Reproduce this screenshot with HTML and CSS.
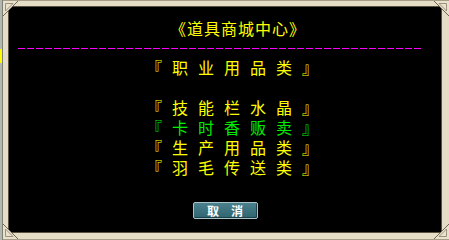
FILE: index.html
```html
<!DOCTYPE html>
<html lang="zh-CN">
  <head>
    <meta charset="UTF-8" />
    <title>道具商城中心</title>
    <link rel="stylesheet" href="styles.css">
  </head>
  <body>
    <div class="page">
      <!-- bord de la fenêtre voisine -->
      <div class="side">
        <div class="side-mark"></div>
      </div>

      <div class="frame">
        <svg class="corner tl" width="15" height="15" viewBox="0 0 15 15">
          <path d="M0 0H15L0 15Z" fill="#e9e1cb" />
          <path d="M15 0L0 15" stroke="#6e6552" stroke-width="1" />
          <path d="M2.5 2.5H10L2.5 10Z" fill="none" stroke="#9a927e" stroke-width="1" />
        </svg>
        <svg class="corner tr" width="15" height="15" viewBox="0 0 15 15">
          <path d="M0 0H15V15Z" fill="#e9e1cb" />
          <path d="M0 0L15 15" stroke="#6e6552" stroke-width="1" />
          <path d="M5 2.5H12.5V10Z" fill="none" stroke="#9a927e" stroke-width="1" />
        </svg>
        <svg class="corner bl" width="15" height="15" viewBox="0 0 15 15">
          <path d="M0 0V15H15Z" fill="#e9e1cb" />
          <path d="M0 0L15 15" stroke="#6e6552" stroke-width="1" />
          <path d="M2.5 5V12.5H10Z" fill="none" stroke="#9a927e" stroke-width="1" />
        </svg>
        <svg class="corner br" width="15" height="15" viewBox="0 0 15 15">
          <path d="M15 0V15H0Z" fill="#e9e1cb" />
          <path d="M15 0L0 15" stroke="#6e6552" stroke-width="1" />
          <path d="M12.5 5V12.5H5Z" fill="none" stroke="#9a927e" stroke-width="1" />
        </svg>

        <div class="screen">
          <h1 class="title">《道具商城中心》</h1>
          <div class="dashes"></div>

          <ul class="menu">
            <li>『职业用品类』</li>
            <li class="spacer"></li>
            <li>『技能栏水晶』</li>
            <li class="active">『卡时香贩卖』</li>
            <li>『生产用品类』</li>
            <li>『羽毛传送类』</li>
          </ul>

          <div class="actions">
            <button class="cancel-btn">取消</button>
          </div>
        </div>
      </div>
    </div>
  </body>
</html>
```

FILE: styles.css
```css
/* Base */
body {
  margin: 0;
  padding: 0;
  background: #a8ada6;
  font-family: "Noto Sans CJK SC", "Noto Sans", sans-serif;
  overflow: hidden;
}

.page {
  display: flex;
  width: 449px;
  height: 240px;
}

/* Fenêtre voisine à gauche */
.side {
  width: 3px;
  background: #b3b7ae;
  border-right: 1px solid #7c7f78;
  box-sizing: border-box;
}

.side-mark {
  margin-top: 49px;
  height: 14px;
  background: #ffff00;
}

/* Cadre beige */
.frame {
  position: relative;
  flex: 1;
  display: flex;
  padding: 5px 7px 6px 5px;
  background: #e6ddc6;
  border-top: 1px solid #a59d88;
  border-bottom: 1px solid #a59d88;
}

.corner {
  position: absolute;
}

.corner.tl { top: 0; left: 0; }
.corner.tr { top: 0; right: 0; }
.corner.bl { bottom: 0; left: 0; }
.corner.br { bottom: 0; right: 0; }

/* Zone noire */
.screen {
  flex: 1;
  display: flex;
  flex-direction: column;
  background: #000000;
  border: 1px solid #5a5140;
  box-sizing: border-box;
}

.title {
  margin: 11px 0 0;
  padding-left: 26px;
  font-size: 16px;
  font-weight: normal;
  line-height: 20px;
  letter-spacing: 1px;
  color: #ffff00;
  text-align: center;
}

.dashes {
  margin: 10px 0 0 9px;
  width: 403px;
  height: 1px;
  background: repeating-linear-gradient(
    to right,
    #ff00ff 0,
    #ff00ff 7px,
    transparent 7px,
    transparent 9px
  );
}

/* Liste des catégories */
.menu {
  list-style: none;
  margin: 8px 0 0;
  padding: 0 0 0 24px;
  font-size: 16px;
  line-height: 20px;
  letter-spacing: 10px;
  color: #ffff00;
  text-align: center;
}

.menu li {
  height: 20px;
}

.menu .spacer {
  height: 20px;
}

.menu .active {
  color: #00ee00;
}

/* Bouton annuler */
.actions {
  display: flex;
  justify-content: center;
  margin-top: 25px;
}

.cancel-btn {
  width: 65px;
  height: 17px;
  padding: 0 0 0 12px;
  background: linear-gradient(#4a818c, #2f6571);
  border: 1px solid #a6c4ca;
  border-radius: 2px;
  box-shadow: inset -1px -1px 0 #1d4048;
  color: #ffffff;
  font-family: "Noto Sans CJK SC", sans-serif;
  font-size: 12px;
  font-weight: bold;
  line-height: 15px;
  letter-spacing: 12px;
  text-align: center;
}
```
